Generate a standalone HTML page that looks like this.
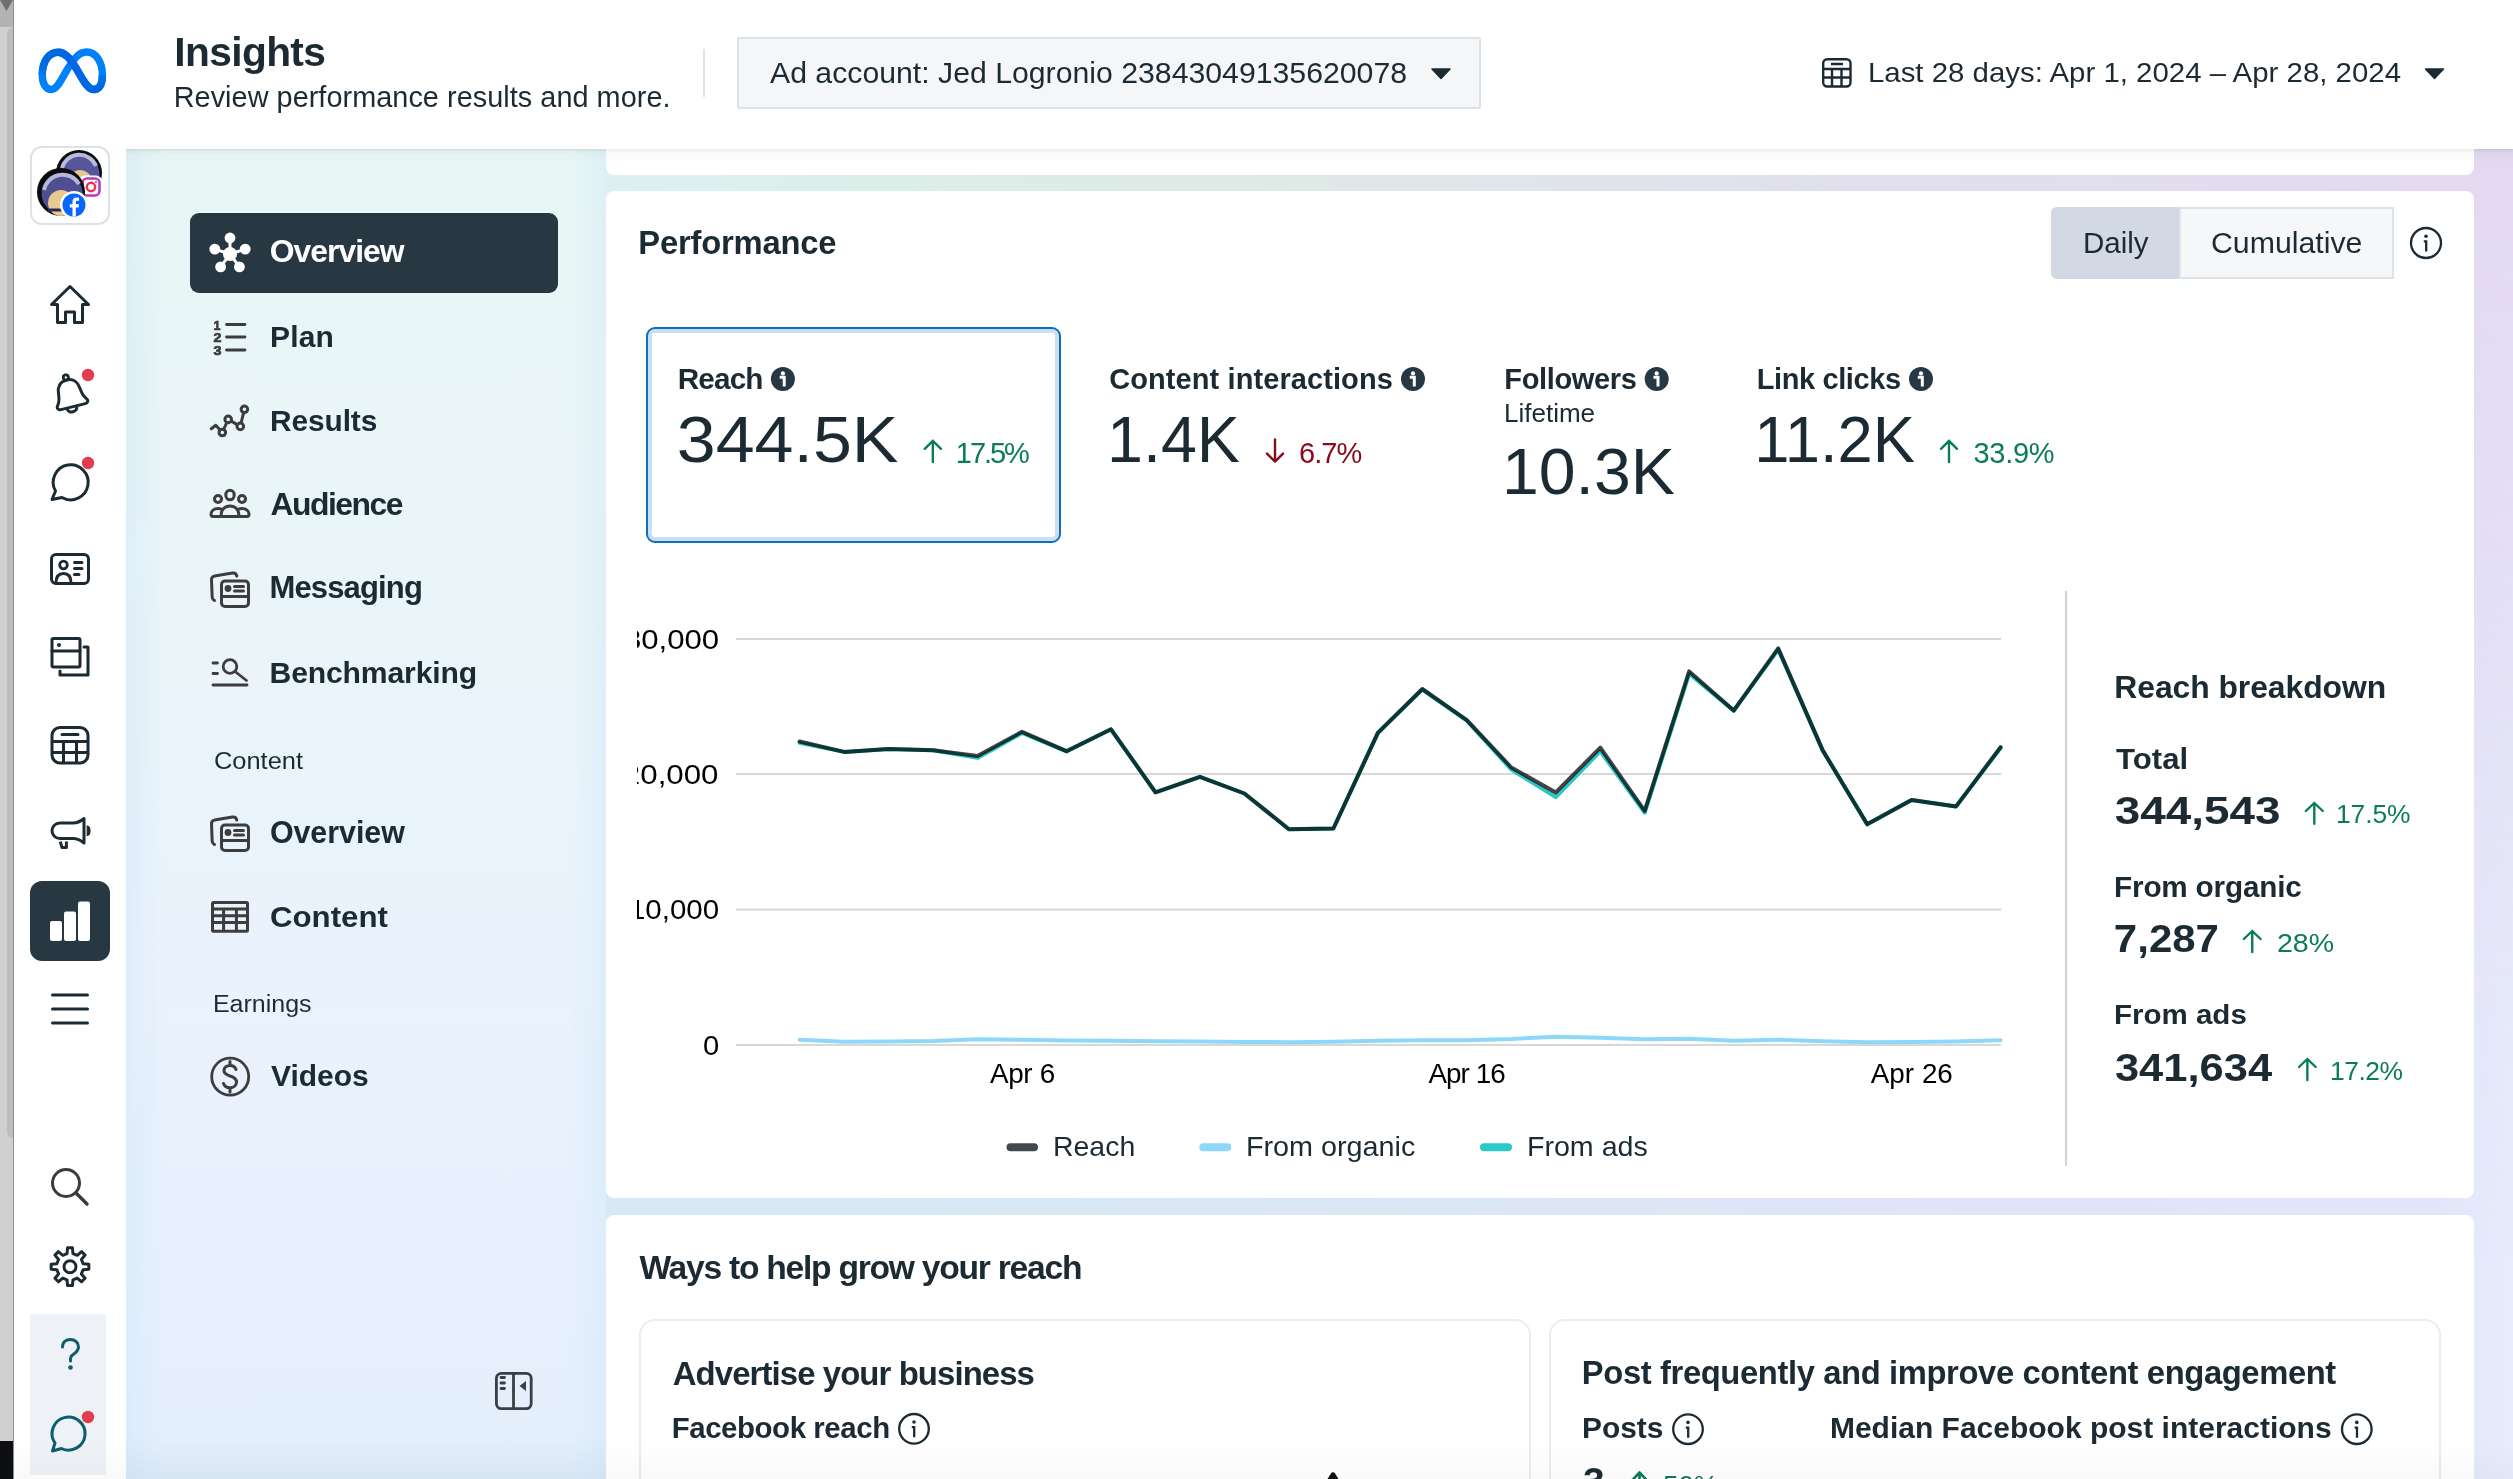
<!DOCTYPE html><html><head><meta charset="utf-8"><style>
*{margin:0;padding:0;box-sizing:border-box}
html,body{width:2513px;height:1479px;overflow:hidden;background:#fff}
body{position:relative;font-family:"Liberation Sans",sans-serif}
.a{position:absolute}
.t{position:absolute;white-space:nowrap;font-family:"Liberation Sans",sans-serif}
svg.full{position:absolute;left:0;top:0;width:2513px;height:1479px}

</style></head><body>
<div class="a" style="left:126px;top:149px;width:2387px;height:1330px;background:linear-gradient(90deg,#d6eaf8 0%,#dae7f6 45%,#e1e5fa 80%,#e3e7fb 97%,#e7edfc 100%)"></div>
<div class="a" style="left:126px;top:149px;width:2387px;height:1330px;background:linear-gradient(90deg,#dcf2f5 0%,#dcf0f2 20%,#dceee8 32%,#dfe8e6 50%,#e0ddee 75%,#e3d9f1 100%);-webkit-mask-image:linear-gradient(180deg,#000 0%,rgba(0,0,0,.7) 30%,rgba(0,0,0,.2) 62%,transparent 85%)"></div>
<div class="a" style="left:126px;top:149px;width:480px;height:1330px;background:linear-gradient(180deg,#e8f6f5 0%,#eaf5f8 30%,#e9f2fd 65%,#e4effc 100%)"></div>
<div class="a" style="left:126px;top:149px;width:480px;height:1330px;background:linear-gradient(90deg,rgba(206,228,248,.4) 0,rgba(206,228,248,0) 36px,rgba(204,230,246,0) 444px,rgba(204,230,246,.35) 480px)"></div>
<div class="a" style="left:126px;top:1430px;width:480px;height:49px;background:linear-gradient(180deg,rgba(205,225,245,0),rgba(205,225,245,.3))"></div>
<div class="a" style="left:13px;top:0;width:113px;height:1479px;background:#fff"></div>
<div class="a" style="left:126px;top:0;width:2387px;height:149px;background:#fff;box-shadow:0 1px 2px rgba(0,0,0,.05)"></div>
<div class="a" style="left:0;top:0;width:14px;height:1479px;background:#d0d0d0"></div>
<div class="a" style="left:7px;top:28px;width:6px;height:1110px;background:#bdbdbd;border-radius:6px 0 0 6px"></div>
<div class="a" style="left:13px;top:0;width:1px;height:1479px;background:#8e8e8e"></div>
<div class="a" style="left:0;top:0;width:13px;height:27px;background:#b3b3b3"></div>
<div class="a" style="left:0;top:1441px;width:13px;height:38px;background:#0d0f14"></div>
<div class="a" style="left:606px;top:120px;width:1868px;height:55px;background:#fff;border-radius:0 0 8px 8px"></div>
<div class="a" style="left:126px;top:149px;width:2387px;height:14px;background:linear-gradient(180deg,rgba(0,0,0,.06),rgba(0,0,0,.015) 40%,rgba(0,0,0,0))"></div>
<div class="a" style="left:606px;top:191px;width:1868px;height:1007px;background:#fff;border-radius:8px"></div>
<div class="a" style="left:606px;top:1215px;width:1868px;height:300px;background:#fff;border-radius:8px"></div>
<div class="a" style="left:639px;top:1319px;width:892px;height:300px;border:2px solid #ebedf0;border-radius:16px"></div>
<div class="a" style="left:1549px;top:1319px;width:892px;height:300px;border:2px solid #ebedf0;border-radius:16px"></div>
<div class="a" style="left:703px;top:49px;width:2px;height:48px;background:#dfe3e8"></div>
<div class="a" style="left:737px;top:37px;width:744px;height:72px;background:#f5f6f8;border:2px solid #dde2e8;border-radius:2px"></div>
<div class="a" style="left:190px;top:213px;width:368px;height:80px;background:#273843;border-radius:9px"></div>
<div class="a" style="left:2051px;top:207px;width:343px;height:72px;background:#f6f7f9;border:2px solid #dde2e8;border-radius:6px 0 0 6px"></div>
<div class="a" style="left:2051px;top:207px;width:128px;height:72px;background:#d2d9e4;border-radius:6px 0 0 6px"></div>
<div class="a" style="left:2179px;top:207px;width:2px;height:72px;background:#dfe4ea"></div>
<div class="a" style="left:646px;top:327px;width:415px;height:216px;border:2px solid #0b6fbe;border-radius:9px;box-shadow:inset 0 0 0 4px #cadff1"></div>
<div class="a" style="left:30px;top:881px;width:80px;height:80px;background:#273843;border-radius:12px"></div>
<div class="a" style="left:30px;top:1314px;width:76px;height:161px;background:#eef2f6"></div>
<div class="a" style="left:30px;top:146px;width:80px;height:79px;border:2px solid #dde1e8;border-radius:12px;background:#fff"></div>
<div class="a" style="left:2065px;top:591px;width:2px;height:575px;background:#cdd4db"></div>
<svg class="full" viewBox="0 0 2513 1479"><defs><linearGradient id="mg" x1="0" y1="0" x2="1" y2="0"><stop offset="0" stop-color="#0068e2"/><stop offset="1" stop-color="#0081fb"/></linearGradient></defs><defs><linearGradient id="lg1" gradientUnits="userSpaceOnUse" x1="0" y1="62" x2="0" y2="82"><stop offset="0" stop-color="#0067e2"/><stop offset="1" stop-color="#0080fa"/></linearGradient><linearGradient id="lg2" gradientUnits="userSpaceOnUse" x1="0" y1="86" x2="0" y2="66"><stop offset="0" stop-color="#0067e2"/><stop offset="1" stop-color="#0080fa"/></linearGradient></defs><path d="M102.4,75 C102.4,62 96,52 86.5,52 C78.5,52 73,60 67,70 C61,80 57,89.5 51.5,89.5 C46,89.5 42.3,84 42.3,75 C42.3,61 49,52.2 58.3,52.2 C65,52.2 70,58 76,68 C82,78 87,89.5 94,89.5 C99.5,89.5 102.4,84 102.4,75 Z" fill="none" stroke="#0080fa" stroke-width="7.4"/><path d="M42.3,75 C42.3,61 49,52.2 58.3,52.2" fill="none" stroke="url(#lg1)" stroke-width="7.4"/><path d="M58.3,52.2 C65,52.2 70,58 76,68 C82,78 87,89.5 94,89.5" fill="none" stroke="#0067e2" stroke-width="7.4"/><path d="M94,89.5 C99.5,89.5 102.4,84 102.4,75" fill="none" stroke="url(#lg2)" stroke-width="7.4"/><g><circle cx="79" cy="173" r="23" fill="#0b0b0f"/><circle cx="79.5" cy="174.5" r="20" fill="#56569a"/><path d="M62,168 A18,18 0 0 1 96,166" stroke="#b9bbd8" stroke-width="4" fill="none"/><circle cx="80" cy="182" r="12" fill="#e6c78f"/></g><rect x="79" y="175.5" width="23" height="24" rx="6" fill="#fff"/><rect x="82.5" y="178.5" width="17" height="17" rx="4.5" fill="none" stroke="#b73bc6" stroke-width="2.6"/><circle cx="91" cy="187" r="4.2" fill="none" stroke="#ee2f55" stroke-width="2.4"/><circle cx="96" cy="182" r="1.1" fill="#c13ab8"/><g><circle cx="61" cy="192" r="24" fill="#0b0b0f"/><circle cx="62" cy="193.5" r="20.5" fill="#4f4e92"/><path d="M44,190 A19,19 0 0 1 79,184" stroke="#b5b7d6" stroke-width="4" fill="none"/><circle cx="61" cy="203" r="13" fill="#e8c990"/><path d="M48,210 H70" stroke="#2a2a55" stroke-width="3"/></g><circle cx="74" cy="205" r="14" fill="#fff"/><circle cx="74" cy="205" r="11.5" fill="#0866ff"/><path d="M75.8,216.5 V207.5 H78.6 L79,204.2 H75.8 V202.3 C75.8,201.3 76.2,200.7 77.5,200.7 H79.1 V197.8 C78.7,197.7 77.7,197.6 76.6,197.6 C74.1,197.6 72.5,199.1 72.5,201.9 V204.2 H69.8 V207.5 H72.5 V216.5 Z" fill="#fff"/><path d="M70,286.5 L51.5,304.5 L57.5,304.5 L57.5,322.5 L65.5,322.5 L65.5,312 L74.5,312 L74.5,322.5 L82.5,322.5 L82.5,304.5 L88.5,304.5 Z" stroke="#1c2b33" stroke-width="3" fill="none" stroke-linecap="round" stroke-linejoin="round"/><g transform="rotate(-14 70 394)"><path d="M70,379.5 C63,379.5 59.5,384.5 59,390.5 C58.5,395.5 58.2,398.5 55.8,401.5 C54.3,403.3 53.8,404.8 54.8,405.8 C55.5,406.6 56.5,407 57.5,407 L82.5,407 C83.5,407 84.5,406.6 85.2,405.8 C86.2,404.8 85.7,403.3 84.2,401.5 C81.8,398.5 81.5,395.5 81,390.5 C80.5,384.5 77,379.5 70,379.5 Z" stroke="#1c2b33" stroke-width="3" fill="none" stroke-linecap="round" stroke-linejoin="round"/><path d="M63.5,407.5 C63.5,413.5 73.5,413.5 73.5,407.5" stroke="#1c2b33" stroke-width="3" fill="none" stroke-linecap="round" stroke-linejoin="round"/><circle cx="70" cy="377" r="2.6" stroke="#1c2b33" stroke-width="2.8" fill="none"/></g><circle cx="88" cy="375" r="6.2" fill="#e23c50"/><path d="M55.5,491 A17.5,17.5 0 1 1 62,497.5 L52,499.5 Z" stroke="#1c2b33" stroke-width="3" fill="none" stroke-linecap="round" stroke-linejoin="round"/><circle cx="88" cy="463" r="6.2" fill="#e23c50"/><rect x="51.5" y="554.5" width="37" height="29" rx="4.5" stroke="#1c2b33" stroke-width="3" fill="none" stroke-linecap="round" stroke-linejoin="round"/><circle cx="63.5" cy="565" r="3.8" stroke="#1c2b33" stroke-width="2.8" fill="none"/><path d="M56,583 C56,576 59,573.5 63.5,573.5 C68,573.5 71,576 71,583" stroke="#1c2b33" stroke-width="3" fill="none" stroke-linecap="round" stroke-linejoin="round"/><path d="M74.5,562.5 H82 M74.5,568.5 H82 M74.5,574.5 H79" stroke="#1c2b33" stroke-width="3" fill="none" stroke-linecap="round" stroke-linejoin="round"/><rect x="52" y="638.5" width="28" height="28.5" rx="1.5" stroke="#1c2b33" stroke-width="3" fill="none" stroke-linecap="round" stroke-linejoin="round"/><path d="M52,651 H80" stroke="#1c2b33" stroke-width="3" fill="none" stroke-linecap="round" stroke-linejoin="round"/><circle cx="59" cy="645" r="2" fill="#1c2b33"/><path d="M60,671 V675 H88 V647 H84" stroke="#1c2b33" stroke-width="3" fill="none" stroke-linecap="round" stroke-linejoin="round"/><rect x="52" y="727.5" width="36" height="35.5" rx="8" stroke="#1c2b33" stroke-width="3" fill="none" stroke-linecap="round" stroke-linejoin="round"/><path d="M62,734.5 H78 M52.5,741.5 H87.5 M52.5,752.5 H87.5 M63.5,741.5 V762.5 M76.5,741.5 V762.5" stroke="#1c2b33" stroke-width="3" fill="none" stroke-linecap="round" stroke-linejoin="round"/><path d="M60,823 H73 C78,823 81,821 84,818.5 L84,843 C81,840.5 78,838.5 73,838.5 H60 C55.5,838.5 52,835 52,830.7 C52,826.5 55.5,823 60,823 Z" stroke="#1c2b33" stroke-width="3" fill="none" stroke-linecap="round" stroke-linejoin="round"/><path d="M87.2,826 C89.5,826.5 90,828.5 90,830.7 C90,833 89.5,835 87.2,835.5 Z" fill="#1c2b33" stroke="#1c2b33" stroke-width="1.2"/><path d="M60.3,841.6 L62,847.6 H66.4 V841.6" stroke="#1c2b33" stroke-width="3" fill="none" stroke-linejoin="round"/><rect x="50" y="921" width="12" height="20" rx="2" fill="#fff"/><rect x="64" y="911.5" width="12" height="29.5" rx="2" fill="#fff"/><rect x="78" y="901.5" width="12" height="39.5" rx="2" fill="#fff"/><path d="M52.5,995 H87.5 M52.5,1009 H87.5 M52.5,1023 H87.5" stroke="#1c2b33" stroke-width="3" fill="none" stroke-linecap="round" stroke-linejoin="round"/><circle cx="66" cy="1183" r="13.5" stroke="#3b3b3b" stroke-width="3" fill="none"/><path d="M76,1193 L87,1204" stroke="#3b3b3b" stroke-width="3.4" stroke-linecap="round"/><path d="M83.17,1263.75 L88.84,1264.24 L88.84,1269.16 L83.17,1269.65 L81.40,1273.93 L85.06,1278.28 L81.58,1281.76 L77.23,1278.10 L72.95,1279.87 L72.46,1285.54 L67.54,1285.54 L67.05,1279.87 L62.77,1278.10 L58.42,1281.76 L54.94,1278.28 L58.60,1273.93 L56.83,1269.65 L51.16,1269.16 L51.16,1264.24 L56.83,1263.75 L58.60,1259.47 L54.94,1255.12 L58.42,1251.64 L62.77,1255.30 L67.05,1253.53 L67.54,1247.86 L72.46,1247.86 L72.95,1253.53 L77.23,1255.30 L81.58,1251.64 L85.06,1255.12 L81.40,1259.47 Z" stroke="#1c2b33" stroke-width="3" fill="none" stroke-linejoin="round"/><circle cx="70" cy="1266.7" r="6" stroke="#1c2b33" stroke-width="3" fill="none"/><path d="M62.5,1347 C62.5,1342 66,1339.5 70.5,1339.5 C75,1339.5 78.5,1342.5 78.5,1347 C78.5,1351 75.5,1353 72.5,1355 C71,1356 70.5,1357.5 70.5,1359.5 L70.5,1361" stroke="#0c5e6c" stroke-width="3" fill="none" stroke-linecap="round" stroke-linejoin="round"/><circle cx="70.5" cy="1367.5" r="2.3" fill="#0c5e6c"/><path d="M55,1443 A16.5,16.5 0 1 1 61.5,1448.5 L52.5,1451 Z" stroke="#0c5e6c" stroke-width="3" fill="none" stroke-linecap="round" stroke-linejoin="round"/><circle cx="88" cy="1417" r="6.2" fill="#e23c50"/><g fill="#fff" stroke="#fff"><line x1="230" y1="254" x2="230.00" y2="238.00" stroke-width="3"/><circle cx="230.00" cy="238.00" r="5.4" stroke="none"/><line x1="230" y1="254" x2="245.22" y2="249.06" stroke-width="3"/><circle cx="245.22" cy="249.06" r="5.4" stroke="none"/><line x1="230" y1="254" x2="239.40" y2="266.94" stroke-width="3"/><circle cx="239.40" cy="266.94" r="5.4" stroke="none"/><line x1="230" y1="254" x2="220.60" y2="266.94" stroke-width="3"/><circle cx="220.60" cy="266.94" r="5.4" stroke="none"/><line x1="230" y1="254" x2="214.78" y2="249.06" stroke-width="3"/><circle cx="214.78" cy="249.06" r="5.4" stroke="none"/><circle cx="230" cy="254" r="7" stroke="none"/></g><path d="M226.5,324.5 H245 M226.5,337 H245 M226.5,350 H245" stroke="#3d3d3d" stroke-width="2.8" stroke-linecap="round"/><g font-family="Liberation Sans" font-weight="700" font-size="13.5" fill="#3d3d3d" stroke="#3d3d3d" stroke-width="0.7"><text x="213.5" y="329.5" textLength="7" lengthAdjust="spacingAndGlyphs">1</text><text x="213.5" y="342.2" textLength="8" lengthAdjust="spacingAndGlyphs">2</text><text x="213.5" y="354.6" textLength="8" lengthAdjust="spacingAndGlyphs">3</text></g><path d="M211.3,428.8 L215.8,425.3 L222.3,432.5 L228.2,419.4 L240.3,426.4 L244.4,409.3" stroke="#3d3d3d" stroke-width="3" fill="none" stroke-linejoin="round" stroke-linecap="round"/><g fill="#eaf5f6" stroke="#3d3d3d" stroke-width="3"><circle cx="222.3" cy="432.5" r="3.3"/><circle cx="228.2" cy="419.4" r="3.3"/><circle cx="240.3" cy="426.4" r="3.3"/><circle cx="244.4" cy="409.3" r="3.3"/></g><g stroke="#3d3d3d" stroke-width="3" fill="none"><ellipse cx="230" cy="495" rx="4.2" ry="4.8"/><circle cx="218" cy="499" r="3.5"/><circle cx="242" cy="499" r="3.5"/><path d="M221,516.5 C221,509 225,506 230,506 C235,506 239,509 239,516.5 Z" stroke-linejoin="round"/><path d="M220,516.5 H213 C211.5,516.5 211,515.5 211,514 C211,511 214,508.5 218,508.5 C219.5,508.5 220.8,508.8 222,509.5"/><path d="M240,516.5 H247 C248.5,516.5 249,515.5 249,514 C249,511 246,508.5 242,508.5 C240.5,508.5 239.2,508.8 238,509.5"/></g><g stroke="#3d3d3d" stroke-width="3" fill="none" stroke-linejoin="round" stroke-linecap="round"><path d="M214.5,600.5 C213,600.0 212.5,599.0 212.2,597.5 L211.5,579.5 C211.5,577.5 212.5,576.5 214.5,576.1 L232.5,573.1 C234.8,572.8 236.3,573.8 236.8,576.1"/><rect x="221.5" y="581.0" width="27" height="25.5" rx="3.5"/><path d="M221.5,596.5 H248.5 M234.5,586.5 H243.5 M234.5,591.0 H243.5" /><circle cx="228" cy="588.5" r="3.4" fill="#3d3d3d" stroke="none"/></g><g stroke="#3d3d3d" stroke-width="2.8" fill="none" stroke-linecap="round"><path d="M213,663 H217.5 M213,673.5 H217.5 M213,685 H247"/><circle cx="230" cy="666.5" r="6.8"/><path d="M235,671.5 L246.5,680.5"/></g><g stroke="#3d3d3d" stroke-width="3" fill="none" stroke-linejoin="round" stroke-linecap="round"><path d="M214.5,844.5 C213,844.0 212.5,843.0 212.2,841.5 L211.5,823.5 C211.5,821.5 212.5,820.5 214.5,820.1 L232.5,817.1 C234.8,816.8 236.3,817.8 236.8,820.1"/><rect x="221.5" y="825.0" width="27" height="25.5" rx="3.5"/><path d="M221.5,840.5 H248.5 M234.5,830.5 H243.5 M234.5,835.0 H243.5" /><circle cx="228" cy="832.5" r="3.4" fill="#3d3d3d" stroke="none"/></g><g stroke="#3d3d3d" stroke-width="3" fill="none" stroke-linejoin="round"><rect x="212.5" y="902.5" width="35" height="28.8" rx="1"/><path d="M212.5,909 H247.5 M212.5,915.8 H247.5 M212.5,922.6 H247.5 M223.6,909 V931.3 M236.4,909 V931.3"/></g><circle cx="230.2" cy="1076.7" r="18.5" stroke="#3d3d3d" stroke-width="2.8" fill="none"/><path d="M236,1069.5 C235,1066.5 232.5,1065.5 230,1065.5 C226.5,1065.5 224,1067.5 224,1070.5 C224,1074 227,1075 230,1076 C233.5,1077 236.5,1078.3 236.5,1082 C236.5,1085.5 233.5,1087.7 230,1087.7 C227,1087.7 224.5,1086.5 223.5,1083.5 M230,1061.5 V1065.5 M230,1087.7 V1092" stroke="#3d3d3d" stroke-width="3" fill="none" stroke-linecap="round"/><g stroke="#3a3f45" stroke-width="2.8" fill="none" stroke-linecap="round"><rect x="496.4" y="1373.4" width="34.8" height="35.2" rx="5"/><path d="M513.5,1373.4 V1408.6 M501,1377.5 H504.5 M501,1383 H504.5 M501,1388.5 H504.5"/></g><path d="M526,1381 V1391 L519.5,1386 Z" fill="#3a3f45"/><g stroke="#1c2b33" stroke-width="2.4" fill="none"><rect x="1823.2" y="59.2" width="27.3" height="27.3" rx="4"/><path d="M1831,64 H1843 M1823.5,69 H1850 M1823.5,77.5 H1850 M1832,69 V86.5 M1841.5,69 V86.5"/></g><path d="M1432,69 H1450 L1441,78.5 Z" fill="#1c2b33" stroke="#1c2b33" stroke-width="1.5" stroke-linejoin="round"/><path d="M2425.5,69 H2443.5 L2434.5,78.5 Z" fill="#1c2b33" stroke="#1c2b33" stroke-width="1.5" stroke-linejoin="round"/><circle cx="2426" cy="243" r="15" stroke="#1c2b33" stroke-width="2.3" fill="none"/><circle cx="2426" cy="236.2" r="1.8" fill="#1c2b33"/><path d="M2423.8,241.4 H2426.2 V251.5" stroke="#1c2b33" stroke-width="2.3" fill="none"/><circle cx="914" cy="1428.8" r="14.8" stroke="#1c2b33" stroke-width="2.3" fill="none"/><circle cx="914" cy="1422.0" r="1.8" fill="#1c2b33"/><path d="M911.8,1427.2 H914.2 V1437.3" stroke="#1c2b33" stroke-width="2.3" fill="none"/><circle cx="1688" cy="1429.2" r="14.8" stroke="#1c2b33" stroke-width="2.3" fill="none"/><circle cx="1688" cy="1422.4" r="1.8" fill="#1c2b33"/><path d="M1685.8,1427.6000000000001 H1688.2 V1437.7" stroke="#1c2b33" stroke-width="2.3" fill="none"/><circle cx="2356.8" cy="1429.2" r="14.8" stroke="#1c2b33" stroke-width="2.3" fill="none"/><circle cx="2356.8" cy="1422.4" r="1.8" fill="#1c2b33"/><path d="M2354.6000000000004,1427.6000000000001 H2357.0 V1437.7" stroke="#1c2b33" stroke-width="2.3" fill="none"/><circle cx="782.9" cy="379" r="12" fill="#263843"/><circle cx="782.9" cy="373.4" r="2.1" fill="#fff"/><path d="M779.6999999999999,377.3 H784.1999999999999 V386.5" stroke="#fff" stroke-width="3" fill="none"/><circle cx="1413" cy="379" r="12" fill="#263843"/><circle cx="1413" cy="373.4" r="2.1" fill="#fff"/><path d="M1409.8,377.3 H1414.3 V386.5" stroke="#fff" stroke-width="3" fill="none"/><circle cx="1656.7" cy="379" r="12" fill="#263843"/><circle cx="1656.7" cy="373.4" r="2.1" fill="#fff"/><path d="M1653.5,377.3 H1658.0 V386.5" stroke="#fff" stroke-width="3" fill="none"/><circle cx="1921" cy="379" r="12" fill="#263843"/><circle cx="1921" cy="373.4" r="2.1" fill="#fff"/><path d="M1917.8,377.3 H1922.3 V386.5" stroke="#fff" stroke-width="3" fill="none"/><path d="M932.85,462 V440.8 M924.7,448.8 L932.85,440.8 L941,448.8" stroke="#0b7d55" stroke-width="2.4" fill="none" stroke-linecap="round" stroke-linejoin="round"/><path d="M1275.0,439.5 V461.6 M1267,453.6 L1275.0,461.6 L1283,453.6" stroke="#8a0a1a" stroke-width="2.4" fill="none" stroke-linecap="round" stroke-linejoin="round"/><path d="M1949.0,462 V440.8 M1941,448.8 L1949.0,440.8 L1957,448.8" stroke="#0b7d55" stroke-width="2.4" fill="none" stroke-linecap="round" stroke-linejoin="round"/><path d="M2314.3,823.7 V803 M2305.8,811 L2314.3,803 L2322.8,811" stroke="#0b7d55" stroke-width="2.4" fill="none" stroke-linecap="round" stroke-linejoin="round"/><path d="M2252.25,952 V931 M2243.9,939 L2252.25,931 L2260.6,939" stroke="#0b7d55" stroke-width="2.4" fill="none" stroke-linecap="round" stroke-linejoin="round"/><path d="M2307.35,1080 V1059 M2299,1067 L2307.35,1059 L2315.7,1067" stroke="#0b7d55" stroke-width="2.4" fill="none" stroke-linecap="round" stroke-linejoin="round"/><line x1="736" y1="639" x2="2001" y2="639" stroke="#d8d8d8" stroke-width="2"/><line x1="736" y1="774" x2="2001" y2="774" stroke="#d8d8d8" stroke-width="2"/><line x1="736" y1="909.5" x2="2001" y2="909.5" stroke="#d8d8d8" stroke-width="2"/><line x1="736" y1="1045" x2="2001" y2="1045" stroke="#d8d8d8" stroke-width="2"/><polyline points="799.6,1039.7 844.1,1041.7 888.6,1041.5 933.0,1041.0 977.5,1039.2 1022.0,1039.7 1066.5,1040.5 1111.0,1040.7 1155.5,1041.2 1199.9,1041.5 1244.4,1042.0 1288.9,1042.2 1333.4,1041.7 1377.9,1040.7 1422.3,1040.2 1466.8,1040.2 1511.3,1039.0 1555.8,1036.8 1600.3,1037.8 1644.7,1039.2 1689.2,1038.8 1733.7,1040.7 1778.2,1039.7 1822.7,1041.2 1867.2,1042.2 1911.6,1042.0 1956.1,1041.5 2000.6,1040.2" fill="none" stroke="#8dd8f8" stroke-width="4" stroke-linecap="round" stroke-linejoin="round"/><polyline points="799.6,742.7 844.1,751.9 888.6,748.9 933.0,750.3 977.5,757.9 1022.0,733.0 1066.5,751.4 1111.0,729.3 1155.5,792.3 1199.9,776.9 1244.4,793.5 1288.9,829.2 1333.4,828.5 1377.9,732.8 1422.3,689.6 1466.8,720.7 1511.3,769.5 1555.8,797.1 1600.3,751.2 1644.7,812.6 1689.2,673.7 1733.7,710.6 1778.2,649.6 1822.7,750.4 1867.2,824.3 1911.6,799.9 1956.1,806.4 2000.6,747.8" fill="none" stroke="#2bc6c6" stroke-width="4" stroke-linecap="round" stroke-linejoin="round"/><polyline points="799.6,741.5 844.1,751.9 888.6,748.9 933.0,750.3 977.5,756.1 1022.0,731.8 1066.5,751.2 1111.0,729.3 1155.5,792.3 1199.9,776.9 1244.4,793.5 1288.9,829.2 1333.4,828.5 1377.9,732.8 1422.3,689.0 1466.8,720.1 1511.3,767.5 1555.8,792.4 1600.3,747.7 1644.7,810.8 1689.2,671.4 1733.7,710.6 1778.2,648.4 1822.7,750.4 1867.2,824.3 1911.6,799.9 1956.1,806.4 2000.6,747.2" fill="none" stroke="#444444" stroke-width="4" stroke-linecap="round" stroke-linejoin="round" style="mix-blend-mode:multiply"/><line x1="1010.5" y1="1147.2" x2="1034" y2="1147.2" stroke="#444950" stroke-width="8" stroke-linecap="round"/><line x1="1203.3" y1="1147.2" x2="1227.3" y2="1147.2" stroke="#8dd8f8" stroke-width="8" stroke-linecap="round"/><line x1="1484" y1="1147.2" x2="1508" y2="1147.2" stroke="#2bc9c9" stroke-width="8" stroke-linecap="round"/><polyline points="1327,1484 1333,1474.5 1339,1484" fill="none" stroke="#111" stroke-width="4.5" stroke-linejoin="round"/><path d="M1639.5,1495 V1472.5 M1632,1480.5 L1639.5,1472.5 L1647,1480.5" stroke="#0b7d55" stroke-width="2.6" fill="none" stroke-linecap="round" stroke-linejoin="round"/><path d="M0,0 H13 L6.5,11 Z" fill="#6f6f6f"/></svg>
<div class="t" style="left:174.25px;top:30.14px;font-size:40.72px;line-height:45.49px;font-weight:700;color:#1c2b33;letter-spacing:-0.628px;">Insights</div>
<div class="t" style="left:173.69px;top:81.00px;font-size:28.84px;line-height:32.21px;font-weight:400;color:#1c2b33;letter-spacing:0.049px;">Review performance results and more.</div>
<div class="t" style="left:770.00px;top:56.54px;font-size:29.13px;line-height:32.54px;font-weight:400;color:#1c2b33;letter-spacing:0.000px;transform:scaleX(1.0379);transform-origin:0.00px 0;">Ad account: Jed Logronio 23843049135620078</div>
<div class="t" style="left:1867.72px;top:56.86px;font-size:28.55px;line-height:31.89px;font-weight:400;color:#1c2b33;letter-spacing:0.000px;transform:scaleX(1.0304);transform-origin:2.28px 0;">Last 28 days: Apr 1, 2024 – Apr 28, 2024</div>
<div class="t" style="left:269.72px;top:234.44px;font-size:31.88px;line-height:35.61px;font-weight:700;color:#fff;letter-spacing:-0.987px;">Overview</div>
<div class="t" style="left:270.05px;top:319.85px;font-size:30.00px;line-height:33.51px;font-weight:700;color:#1c2b33;letter-spacing:0.150px;">Plan</div>
<div class="t" style="left:270.06px;top:403.58px;font-size:29.86px;line-height:33.35px;font-weight:700;color:#1c2b33;letter-spacing:-0.107px;">Results</div>
<div class="t" style="left:270.40px;top:486.54px;font-size:31.88px;line-height:35.61px;font-weight:700;color:#1c2b33;letter-spacing:-1.466px;">Audience</div>
<div class="t" style="left:269.48px;top:570.93px;font-size:31.01px;line-height:34.64px;font-weight:700;color:#1c2b33;letter-spacing:-0.857px;">Messaging</div>
<div class="t" style="left:269.54px;top:655.52px;font-size:30.14px;line-height:33.67px;font-weight:700;color:#1c2b33;letter-spacing:-0.149px;">Benchmarking</div>
<div class="t" style="left:213.99px;top:747.10px;font-size:24.20px;line-height:27.03px;font-weight:400;color:#1c2b33;letter-spacing:0.000px;transform:scaleX(1.0518);transform-origin:1.21px 0;">Content</div>
<div class="t" style="left:269.88px;top:815.46px;font-size:30.43px;line-height:34.00px;font-weight:700;color:#1c2b33;letter-spacing:-0.045px;">Overview</div>
<div class="t" style="left:269.80px;top:899.85px;font-size:30.00px;line-height:33.51px;font-weight:700;color:#1c2b33;letter-spacing:0.000px;transform:scaleX(1.0416);transform-origin:1.20px 0;">Content</div>
<div class="t" style="left:213.01px;top:991.32px;font-size:23.62px;line-height:26.39px;font-weight:400;color:#1c2b33;letter-spacing:0.000px;transform:scaleX(1.0588);transform-origin:1.89px 0;">Earnings</div>
<div class="t" style="left:270.65px;top:1060.01px;font-size:29.28px;line-height:32.70px;font-weight:700;color:#1c2b33;letter-spacing:0.000px;transform:scaleX(1.0242);transform-origin:0.15px 0;">Videos</div>
<div class="t" style="left:638.27px;top:225.36px;font-size:32.75px;line-height:36.59px;font-weight:700;color:#1c2b33;letter-spacing:-0.201px;">Performance</div>
<div class="t" style="left:2082.68px;top:226.77px;font-size:28.99px;line-height:32.38px;font-weight:400;color:#1c2b33;letter-spacing:0.000px;transform:scaleX(1.0181);transform-origin:2.32px 0;">Daily</div>
<div class="t" style="left:2210.55px;top:226.77px;font-size:28.99px;line-height:32.38px;font-weight:400;color:#1c2b33;letter-spacing:0.000px;transform:scaleX(1.0452);transform-origin:1.45px 0;">Cumulative</div>
<div class="t" style="left:677.77px;top:362.41px;font-size:29.71px;line-height:33.19px;font-weight:700;color:#1c2b33;letter-spacing:-0.854px;">Reach</div>
<div class="t" style="left:677.10px;top:404.01px;font-size:65.07px;line-height:72.69px;font-weight:400;color:#1c2b33;letter-spacing:0.000px;transform:scaleX(1.0752);transform-origin:2.60px 0;">344.5K</div>
<div class="t" style="left:955.83px;top:436.67px;font-size:28.99px;line-height:32.38px;font-weight:400;color:#0b7d55;letter-spacing:-2.046px;">17.5%</div>
<div class="t" style="left:1109.24px;top:362.77px;font-size:28.99px;line-height:32.38px;font-weight:700;color:#1c2b33;letter-spacing:0.094px;">Content interactions</div>
<div class="t" style="left:1107.42px;top:404.01px;font-size:65.07px;line-height:72.69px;font-weight:400;color:#1c2b33;letter-spacing:0.000px;transform:scaleX(0.9930);transform-origin:4.88px 0;">1.4K</div>
<div class="t" style="left:1298.95px;top:436.67px;font-size:28.99px;line-height:32.38px;font-weight:400;color:#8a0a1a;letter-spacing:-0.874px;">6.7%</div>
<div class="t" style="left:1504.32px;top:362.77px;font-size:28.99px;line-height:32.38px;font-weight:700;color:#1c2b33;letter-spacing:-0.347px;">Followers</div>
<div class="t" style="left:1504.01px;top:400.34px;font-size:24.93px;line-height:27.84px;font-weight:400;color:#1c2b33;letter-spacing:0.000px;transform:scaleX(1.0448);transform-origin:1.99px 0;">Lifetime</div>
<div class="t" style="left:1501.82px;top:436.31px;font-size:65.07px;line-height:72.69px;font-weight:400;color:#1c2b33;letter-spacing:0.000px;transform:scaleX(1.0176);transform-origin:4.88px 0;">10.3K</div>
<div class="t" style="left:1756.72px;top:362.77px;font-size:28.99px;line-height:32.38px;font-weight:700;color:#1c2b33;letter-spacing:-0.382px;">Link clicks</div>
<div class="t" style="left:1753.72px;top:404.01px;font-size:65.07px;line-height:72.69px;font-weight:400;color:#1c2b33;letter-spacing:0.000px;transform:scaleX(0.9735);transform-origin:4.88px 0;">11.2K</div>
<div class="t" style="left:1973.54px;top:436.67px;font-size:28.99px;line-height:32.38px;font-weight:400;color:#0b7d55;letter-spacing:-0.300px;">33.9%</div>
<div class="a" style="left:637px;top:600px;width:120px;height:480px;overflow:hidden">
<div class="t" style="left:-13.24px;top:24.19px;font-size:28.41px;line-height:31.73px;color:#000;transform:scaleX(1.0968);transform-origin:1.14px 0">30,000</div>
<div class="t" style="left:-13.52px;top:159.29px;font-size:28.41px;line-height:31.73px;color:#000;transform:scaleX(1.1005);transform-origin:1.42px 0">20,000</div>
<div class="t" style="left:-8.23px;top:294.29px;font-size:28.41px;line-height:31.73px;color:#000;transform:scaleX(1.0382);transform-origin:2.13px 0">10,000</div>
<div class="t" style="left:65.76px;top:429.79px;font-size:28.41px;line-height:31.73px;color:#000;transform:scaleX(1.0268);transform-origin:1.14px 0">0</div>
</div>
<div class="t" style="left:990.00px;top:1057.52px;font-size:27.83px;line-height:31.08px;font-weight:400;color:#000;letter-spacing:-0.348px;">Apr 6</div>
<div class="t" style="left:1428.50px;top:1057.52px;font-size:27.83px;line-height:31.08px;font-weight:400;color:#000;letter-spacing:-0.967px;">Apr 16</div>
<div class="t" style="left:1870.80px;top:1057.52px;font-size:27.83px;line-height:31.08px;font-weight:400;color:#000;letter-spacing:0.013px;">Apr 26</div>
<div class="t" style="left:1053.07px;top:1131.32px;font-size:27.83px;line-height:31.08px;font-weight:400;color:#1c2b33;letter-spacing:0.000px;transform:scaleX(1.0225);transform-origin:2.23px 0;">Reach</div>
<div class="t" style="left:1245.77px;top:1131.32px;font-size:27.83px;line-height:31.08px;font-weight:400;color:#1c2b33;letter-spacing:0.000px;transform:scaleX(1.0337);transform-origin:2.23px 0;">From organic</div>
<div class="t" style="left:1526.77px;top:1131.32px;font-size:27.83px;line-height:31.08px;font-weight:400;color:#1c2b33;letter-spacing:0.000px;transform:scaleX(1.0283);transform-origin:2.23px 0;">From ads</div>
<div class="t" style="left:2114.33px;top:670.44px;font-size:31.88px;line-height:35.61px;font-weight:700;color:#1c2b33;letter-spacing:-0.070px;">Reach breakdown</div>
<div class="t" style="left:2115.70px;top:741.92px;font-size:30.14px;line-height:33.67px;font-weight:700;color:#1c2b33;letter-spacing:0.000px;transform:scaleX(1.0345);transform-origin:0.30px 0;">Total</div>
<div class="t" style="left:2115.03px;top:789.15px;font-size:38.84px;line-height:43.38px;font-weight:700;color:#1c2b33;letter-spacing:0.000px;transform:scaleX(1.1805);transform-origin:0.97px 0;">344,543</div>
<div class="t" style="left:2336.02px;top:800.13px;font-size:26.38px;line-height:29.46px;font-weight:400;color:#0b7d55;letter-spacing:-0.094px;">17.5%</div>
<div class="t" style="left:2114.07px;top:870.31px;font-size:29.71px;line-height:33.19px;font-weight:700;color:#1c2b33;letter-spacing:-0.193px;">From organic</div>
<div class="t" style="left:2114.45px;top:917.45px;font-size:38.84px;line-height:43.38px;font-weight:700;color:#1c2b33;letter-spacing:0.000px;transform:scaleX(1.0809);transform-origin:1.55px 0;">7,287</div>
<div class="t" style="left:2276.68px;top:928.73px;font-size:26.38px;line-height:29.46px;font-weight:400;color:#0b7d55;letter-spacing:0.000px;transform:scaleX(1.0829);transform-origin:1.32px 0;">28%</div>
<div class="t" style="left:2114.17px;top:999.16px;font-size:28.12px;line-height:31.41px;font-weight:700;color:#1c2b33;letter-spacing:0.000px;transform:scaleX(1.0504);transform-origin:1.83px 0;">From ads</div>
<div class="t" style="left:2115.03px;top:1045.95px;font-size:38.84px;line-height:43.38px;font-weight:700;color:#1c2b33;letter-spacing:0.000px;transform:scaleX(1.1203);transform-origin:0.97px 0;">341,634</div>
<div class="t" style="left:2330.02px;top:1057.23px;font-size:26.38px;line-height:29.46px;font-weight:400;color:#0b7d55;letter-spacing:-0.469px;">17.2%</div>
<div class="t" style="left:639.40px;top:1249.07px;font-size:33.62px;line-height:37.56px;font-weight:700;color:#1c2b33;letter-spacing:-1.253px;">Ways to help grow your reach</div>
<div class="t" style="left:672.78px;top:1355.63px;font-size:32.90px;line-height:36.75px;font-weight:700;color:#1c2b33;letter-spacing:-0.904px;">Advertise your business</div>
<div class="t" style="left:671.69px;top:1412.47px;font-size:29.42px;line-height:32.86px;font-weight:700;color:#1c2b33;letter-spacing:-0.420px;">Facebook reach</div>
<div class="t" style="left:1581.87px;top:1355.36px;font-size:32.75px;line-height:36.59px;font-weight:700;color:#1c2b33;letter-spacing:-0.381px;">Post frequently and improve content engagement</div>
<div class="t" style="left:1582.09px;top:1412.47px;font-size:29.42px;line-height:32.86px;font-weight:700;color:#1c2b33;letter-spacing:0.000px;transform:scaleX(1.0165);transform-origin:1.91px 0;">Posts</div>
<div class="t" style="left:1830.09px;top:1412.47px;font-size:29.42px;line-height:32.86px;font-weight:700;color:#1c2b33;letter-spacing:0.000px;transform:scaleX(1.0199);transform-origin:1.91px 0;">Median Facebook post interactions</div>
<div class="t" style="left:1583.03px;top:1459.85px;font-size:38.84px;line-height:43.38px;font-weight:700;color:#1c2b33;letter-spacing:0.000px;">3</div>
<div class="t" style="left:1662.94px;top:1471.13px;font-size:26.38px;line-height:29.46px;font-weight:400;color:#0b7d55;letter-spacing:0.000px;transform:scaleX(1.0537);transform-origin:1.06px 0;">50%</div>
<div class="a" style="left:13px;top:1440px;width:2500px;height:39px;background:linear-gradient(180deg,rgba(0,0,0,0),rgba(0,0,0,.025))"></div>
</body></html>
